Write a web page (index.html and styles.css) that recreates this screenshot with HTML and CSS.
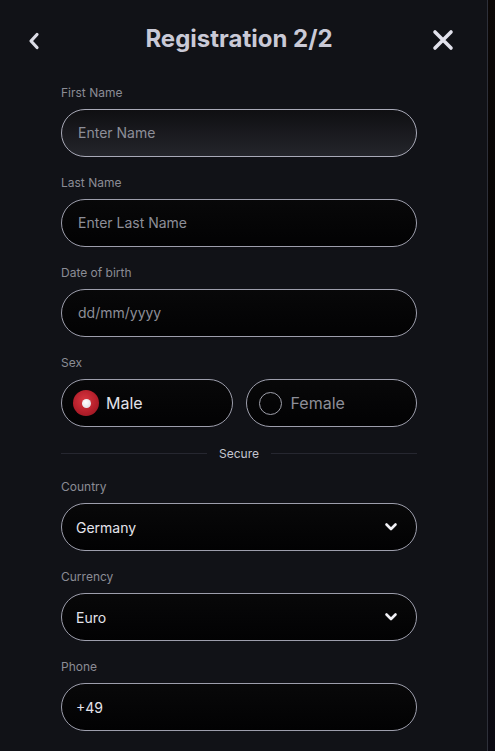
FILE: index.html
```html
<!DOCTYPE html>
<html lang="en">
<head>
<meta charset="utf-8">
<link rel="stylesheet" href="styles.css">
<title>Registration 2/2</title>
</head>
<body>
<div class="page">
  <div class="panel">
    <header class="header">
      <button class="icon-btn back" aria-label="Back">
        <svg width="14" height="18" viewBox="0 0 14 18"><path d="M10 2.5 L4 9 L10 15.5" fill="none" stroke="#dcdce6" stroke-width="3.2" stroke-linecap="round" stroke-linejoin="round"/></svg>
      </button>
      <h1 class="title">Registration 2/2</h1>
      <button class="icon-btn close" aria-label="Close">
        <svg width="22" height="22" viewBox="0 0 22 22"><path d="M3 3 L19 19 M19 3 L3 19" fill="none" stroke="#e2e2ec" stroke-width="3.6" stroke-linecap="round"/></svg>
      </button>
    </header>
    <form class="form">
      <div class="field">
        <label class="label">First Name</label>
        <div class="input input-focus"><span class="placeholder">Enter Name</span></div>
      </div>
      <div class="field">
        <label class="label">Last Name</label>
        <div class="input"><span class="placeholder">Enter Last Name</span></div>
      </div>
      <div class="field">
        <label class="label">Date of birth</label>
        <div class="input"><span class="placeholder">dd/mm/yyyy</span></div>
      </div>
      <div class="field">
        <label class="label">Sex</label>
        <div class="sex-row">
          <div class="sex-opt checked"><span class="radio on"><span class="dot"></span></span><span class="sex-text">Male</span></div>
          <div class="sex-opt"><span class="radio off"></span><span class="sex-text muted">Female</span></div>
        </div>
      </div>
      <div class="divider"><span class="line"></span><span class="divider-text">Secure</span><span class="line"></span></div>
      <div class="field">
        <label class="label">Country</label>
        <div class="input select"><span class="value">Germany</span>
          <svg class="chev" width="14" height="10" viewBox="0 0 14 10"><path d="M2.5 2.5 L7 7 L11.5 2.5" fill="none" stroke="#f0f0f5" stroke-width="2.6" stroke-linecap="round" stroke-linejoin="round"/></svg>
        </div>
      </div>
      <div class="field">
        <label class="label">Currency</label>
        <div class="input select"><span class="value">Euro</span>
          <svg class="chev" width="14" height="10" viewBox="0 0 14 10"><path d="M2.5 2.5 L7 7 L11.5 2.5" fill="none" stroke="#f0f0f5" stroke-width="2.6" stroke-linecap="round" stroke-linejoin="round"/></svg>
        </div>
      </div>
      <div class="field">
        <label class="label">Phone</label>
        <div class="input"><span class="value">+49</span></div>
      </div>
    </form>
  </div>
  <div class="backdrop"></div>
</div>
</body>
</html>
```
FILE: styles.css
```css
* { box-sizing: border-box; }
html, body { margin: 0; padding: 0; }
body {
  background: #070505;
  font-family: Inter, "Noto Sans", "Liberation Sans", sans-serif;
  width: 495px;
  height: 751px;
  overflow: hidden;
}
.page {
  display: flex;
  height: 751px;
}
.panel {
  width: 488px;
  height: 751px;
  background: #111217;
  border-right: 1px solid #2e303a;
  flex-shrink: 0;
}
.backdrop {
  flex: 1;
  background: linear-gradient(180deg, #0c0807 0%, #050303 40%, #0a0607 70%, #0b0a12 100%);
}
.header {
  height: 76px;
  display: flex;
  align-items: center;
  justify-content: space-between;
  padding: 0 33px 0 27px;
}
.icon-btn {
  background: none;
  border: 0;
  padding: 0;
  display: flex;
  align-items: center;
  justify-content: center;
}
.back { margin-top: 6px; }
.close { margin-top: 4px; }
.title {
  margin: 0;
  font-size: 24px;
  font-weight: 700;
  color: #c9c9d6;
  letter-spacing: 0;
  margin-left: 5px;
}
.form {
  padding: 9px 0 0 61px;
  width: 417px;
  display: flex;
  flex-direction: column;
}
.field {
  display: flex;
  flex-direction: column;
  margin-bottom: 18px;
}
.label {
  font-size: 12px;
  line-height: 16px;
  color: #8b8c95;
  margin-bottom: 8px;
}
.input {
  height: 48px;
  border: 1px solid #9d9eac;
  border-radius: 24px;
  background: linear-gradient(180deg, #080809 0%, #020203 100%);
  display: flex;
  align-items: center;
  padding: 0 17px 0 16px;
}
.input-focus {
  background: linear-gradient(180deg, #0f0f12 0%, #24252b 100%);
  border-color: #a9aab8;
}
.placeholder {
  font-size: 14px;
  color: #8d8e98;
  margin-top: -1px;
}
.value {
  font-size: 14px;
  color: #e4e4ec;
  flex: 1;
  margin-left: -2px;
}
.select .chev { margin-right: 1px; }
.sex-row {
  display: flex;
  gap: 13px;
}
.sex-opt {
  flex: 1;
  height: 48px;
  border: 1px solid #9d9eac;
  border-radius: 24px;
  background: linear-gradient(180deg, #080809 0%, #020203 100%);
  display: flex;
  align-items: center;
  padding-left: 11px;
}
.radio {
  border-radius: 50%;
  display: flex;
  align-items: center;
  justify-content: center;
  flex-shrink: 0;
}
.radio.on {
  width: 26px;
  height: 26px;
  background: radial-gradient(circle at 45% 40%, #d83841 0%, #b51f2b 55%, #8e1420 100%);
  margin-right: 7px;
}
.dot {
  width: 9px;
  height: 9px;
  border-radius: 50%;
  background: radial-gradient(circle at 40% 35%, #ffffff 0%, #d8d8e0 100%);
}
.radio.off {
  width: 23px;
  height: 23px;
  border: 1px solid #a0a1ac;
  margin-left: 1px;
  margin-right: 9px;
}
.sex-text {
  font-size: 16px;
  color: #e2e2ea;
  margin-top: -1px;
}
.sex-text.muted { color: #8d8e98; }
.divider {
  display: flex;
  align-items: center;
  margin-top: 0;
  margin-bottom: 18px;
  height: 16px;
}
.line {
  flex: 1;
  height: 1px;
  background: #262730;
}
.divider-text {
  font-size: 12px;
  color: #c4c5cf;
  padding: 0 12px;
}
```
